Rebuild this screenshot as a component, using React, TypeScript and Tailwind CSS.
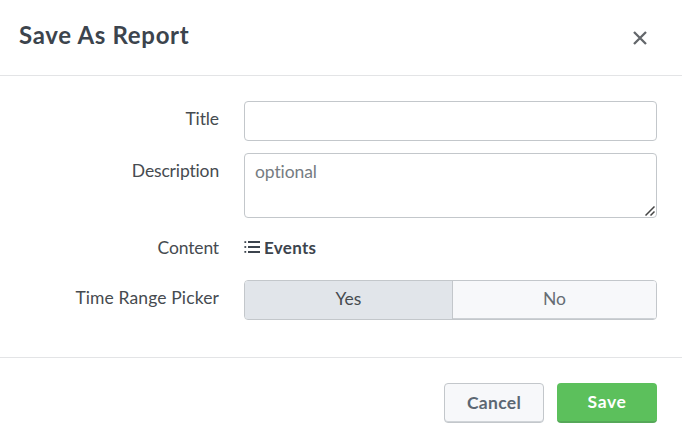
import type { ReactNode } from 'react';

function Row({ label, className, labelClassName, children }: { label: string; className: string; labelClassName: string; children: ReactNode }) {
  return (
    <div className={`flex ${className}`}>
      <div className={`w-[219px] shrink-0 pt-[6px] text-right text-[17.5px] leading-6 whitespace-nowrap text-[#464b50] ${labelClassName}`}>
        {label}
      </div>
      <div className="ml-[25px] w-[413px] shrink-0">{children}</div>
    </div>
  );
}

function ListIcon() {
  return (
    <svg className="mr-[4px] mb-[2px] h-[14px] w-4" viewBox="0 0 16 14" fill="#3c444d">
      <rect x="0.4" y="1.2" width="1.8" height="1.8" />
      <rect x="0.4" y="6.1" width="1.8" height="1.8" />
      <rect x="0.4" y="11" width="1.8" height="1.8" />
      <rect x="4" y="1" width="12" height="2" />
      <rect x="4" y="6" width="12" height="2" />
      <rect x="4" y="11" width="12" height="2" />
    </svg>
  );
}

export default function App() {
  return (
    <div className="flex h-[446px] w-[682px] flex-col bg-white font-['Lato','Open_Sans',sans-serif] text-[#3c444d] [font-variant-ligatures:none]">
      <header className="flex h-[76px] shrink-0 justify-between border-b border-[#e3e4e6] pl-[19px]">
        <h1 className="pt-[19px] text-[24px] leading-8 font-bold tracking-[0.68px] text-[#3c444d]">Save As Report</h1>
        <button aria-label="Close" className="mt-[31px] mr-[35px] h-[14px] w-[14px]">
          <svg className="h-[14px] w-[14px]" viewBox="0 0 14 14" fill="none" stroke="#63676b" strokeWidth="2.3">
            <path d="M1 1L13 13M13 1L1 13" />
          </svg>
        </button>
      </header>

      <main className="flex h-[281px] shrink-0 flex-col pt-[25px]">
        <Row label="Title" className="h-[52px]" labelClassName="tracking-[-0.1px]">
          <input aria-label="Title" className="block h-10 w-full rounded-[4px] border border-[#c3c7cb] bg-white px-[11px] outline-none" />
        </Row>
        <Row label="Description" className="h-[77px]" labelClassName="tracking-[-0.15px]">
          <div className="relative">
            <textarea
              aria-label="Description"
              placeholder="optional"
              className="block h-[65px] w-full resize-none rounded-[4px] border border-[#c3c7cb] bg-white px-[10px] pt-[6px] text-[17.5px] leading-6 tracking-[-0.1px] outline-none placeholder:text-[#767c82]"
            />
            <svg className="absolute right-[2px] bottom-[2px] h-[10px] w-[10px]" viewBox="0 0 10 10" fill="none" stroke="#454545" strokeWidth="1.5">
              <path d="M0.5 9.5L9.5 0.5M5.5 9.5L9.5 5.5" />
            </svg>
          </div>
        </Row>
        <Row label="Content" className="h-[50px]" labelClassName="tracking-[-0.15px]">
          <div className="flex h-[36px] items-center text-[17px] leading-6 font-bold tracking-[0.3px]">
            <ListIcon />
            Events
          </div>
        </Row>
        <Row label="Time Range Picker" className="h-10" labelClassName="tracking-[0.12px]">
          <div className="flex h-10 overflow-hidden rounded-[4px] border border-[#c3c7cb] text-[17.5px] leading-6 shadow-[inset_0_-1px_0_#d0d4d8]">
            <button className="w-[208px] border-r border-[#c3c7cb] bg-[#e1e5ea] pb-[2px] text-[#464b50]">Yes</button>
            <button className="flex-1 border-b border-[#cdd1d5] bg-[#f7f8fa] pb-px text-[#666d74]">No</button>
          </div>
        </Row>
      </main>

      <footer className="flex flex-1 justify-end gap-[13px] border-t border-[#e3e4e6] pt-[25px] pr-[25px] text-[17.5px] leading-6 font-bold">
        <button className="h-10 w-[100px] rounded-[4px] border border-[#c3c7cb] bg-[#f7f8fa] pb-px tracking-[0.3px] text-[#5c6773] shadow-[inset_0_-1px_0_#d0d4d8]">Cancel</button>
        <button className="h-10 w-[100px] rounded-[4px] border-b-2 border-[#55a858] bg-[#5cc05c] tracking-[0.6px] text-white">Save</button>
      </footer>
    </div>
  );
}
